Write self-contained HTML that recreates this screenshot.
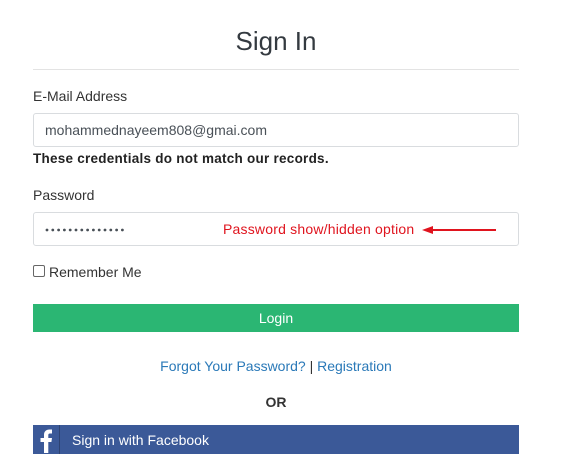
<!DOCTYPE html>
<html><head><meta charset="utf-8"><style>
body{margin:0;width:563px;height:461px;background:#fff;font-family:"Liberation Sans",sans-serif;color:#212529;position:relative;overflow:hidden}
.a{position:absolute;white-space:nowrap}
.inp{position:absolute;left:33px;width:484px;height:32px;border:1px solid #d9dcdf;border-radius:3px;background:#fff}
</style></head><body>
<div class="a" style="left:0;width:552px;text-align:center;top:25px;font-size:26px;color:#343a40;line-height:32px">Sign In</div>
<div class="a" style="left:33px;top:69px;width:486px;height:1px;background:#e3e3e3"></div>
<div class="a" style="left:33px;top:87px;font-size:14px;line-height:18px;color:#333">E-Mail Address</div>
<div class="inp" style="top:113px"></div>
<div class="a" style="left:45px;top:122px;font-size:14px;line-height:16px;color:#495057">mohammednayeem808@gmai.com</div>
<div class="a" style="left:33px;top:150px;font-size:13.5px;font-weight:bold;line-height:17px;color:#222;letter-spacing:0.25px">These credentials do not match our records.</div>
<div class="a" style="left:33px;top:186px;font-size:14px;line-height:18px;color:#333">Password</div>
<div class="inp" style="top:212px"></div>
<svg class="a" style="left:44px;top:226px" width="86" height="8" fill="#495057"><g>
<circle cx="3" cy="4" r="1.4"/><circle cx="8.8" cy="4" r="1.4"/><circle cx="14.6" cy="4" r="1.4"/><circle cx="20.4" cy="4" r="1.4"/><circle cx="26.2" cy="4" r="1.4"/><circle cx="32" cy="4" r="1.4"/><circle cx="37.8" cy="4" r="1.4"/><circle cx="43.6" cy="4" r="1.4"/><circle cx="49.4" cy="4" r="1.4"/><circle cx="55.2" cy="4" r="1.4"/><circle cx="61" cy="4" r="1.4"/><circle cx="66.8" cy="4" r="1.4"/><circle cx="72.6" cy="4" r="1.4"/><circle cx="78.4" cy="4" r="1.4"/></g></svg>
<div class="a" style="left:223px;top:221px;font-size:14px;line-height:16px;color:#e0141e;letter-spacing:0.2px">Password show/hidden option</div>
<svg class="a" style="left:420px;top:225px" width="80" height="10"><path d="M10 5H76" stroke="#e0141e" stroke-width="2"/><path d="M2 5L13 1V9Z" fill="#e0141e"/></svg>
<div class="a" style="left:33px;top:265px;width:10px;height:10px;border:1px solid #666;border-radius:2px"></div>
<div class="a" style="left:49px;top:263px;font-size:14px;line-height:18px;color:#333">Remember Me</div>
<div class="a" style="left:33px;top:304px;width:486px;height:28px;background:#2bb673;color:#fff;font-size:14px;line-height:29px;text-align:center">Login</div>
<div class="a" style="left:0;width:552px;text-align:center;top:357px;font-size:14px;line-height:18px;color:#2a79b8">Forgot Your Password? <span style="color:#333">|</span> Registration</div>
<div class="a" style="left:0;width:552px;text-align:center;top:393px;font-size:14px;font-weight:bold;line-height:18px;color:#333">OR</div>
<div class="a" style="left:33px;top:425px;width:486px;height:29px;background:#3b5998"></div>
<div class="a" style="left:59px;top:425px;width:1px;height:29px;background:#2d4373"></div>
<svg class="a" style="left:39px;top:429px" width="14" height="24"><path d="M5 24V13H1.5V9H5V6C5 2.5 7 0.5 10.5 0.5H13V4.5H11C9.6 4.5 9.3 5.2 9.3 6.3V9H13L12.4 13H9.3V24Z" fill="#fff"/></svg>
<div class="a" style="left:72px;top:432px;font-size:14px;line-height:17px;color:#fff">Sign in with Facebook</div>
</body></html>
